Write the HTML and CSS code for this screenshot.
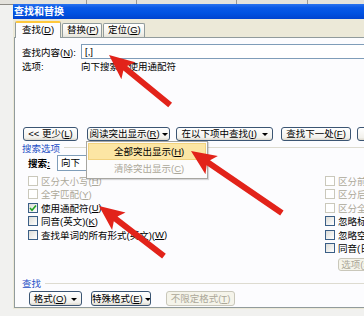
FILE: index.html
```html
<!DOCTYPE html>
<html lang="zh-CN">
<head>
    <meta charset="UTF-8">
    <title>查找和替换</title>
    <link rel="stylesheet" href="styles.css">
</head>
<body>
    <div class="strip">
        <span class="cell" style="width: 87px"></span>
        <span class="cell" style="width: 50px"></span>
        <span class="cell" style="width: 100px"></span>
        <span class="cell" style="width: 71px"></span>
    </div>

    <div class="window">
        <div class="titlebar">查找和替换</div>

        <div class="tabs">
            <div class="tab active">查找(<u>D</u>)</div>
            <div class="tab">替换(<u>P</u>)</div>
            <div class="tab">定位(<u>G</u>)</div>
        </div>

        <div class="panel">
            <div class="find-row">
                <span class="field-label">查找内容(<u>N</u>):</span>
                <div class="input">[,]</div>
            </div>
            <div class="options-row">
                <span class="field-label">选项:</span>
                <span>向下搜索，使用通配符</span>
            </div>

            <div class="btn-row">
                <button class="btn btn-less">&lt;&lt; 更少(<u>L</u>)</button>
                <button class="btn btn-read">阅读突出显示(<u>R</u>)<i class="caret"></i></button>
                <button class="btn btn-within">在以下项中查找(<u>I</u>) <i class="caret"></i></button>
                <button class="btn btn-next">查找下一处(<u>F</u>)</button>
                <button class="btn btn-cancel">取消</button>
            </div>

            <div class="group-head"><span>搜索选项</span><span class="rule"></span></div>

            <div class="search-row">
                <span class="search-label">搜索<u>:</u></span>
                <div class="select">向下</div>
            </div>

            <div class="checks">
                <div class="col">
                    <div class="check disabled"><span class="box"></span>区分大小写(<u>H</u>)</div>
                    <div class="check disabled"><span class="box"></span>全字匹配(<u>Y</u>)</div>
                    <div class="check"><span class="box"><svg width="8" height="8" viewBox="0 0 8 8"><path d="M1 4 L3 6.2 L7 1.5" fill="none" stroke="#21a121" stroke-width="1.6"/></svg></span>使用通配符(<u>U</u>)</div>
                    <div class="check"><span class="box"></span>同音(英文)(<u>K</u>)</div>
                    <div class="check"><span class="box"></span>查找单词的所有形式(英文)(<u>W</u>)</div>
                </div>
                <div class="col">
                    <div class="check disabled"><span class="box"></span>区分前缀(<u>X</u>)</div>
                    <div class="check disabled"><span class="box"></span>区分后缀(<u>T</u>)</div>
                    <div class="check disabled"><span class="box"></span>区分全/半角(<u>M</u>)</div>
                    <div class="check"><span class="box"></span>忽略标点符号(<u>S</u>)</div>
                    <div class="check"><span class="box"></span>忽略空格(<u>A</u>)</div>
                    <div class="check"><span class="box"></span>同音(日文)(<u>J</u>)</div>
                    <button class="btn btn-opts" disabled>选项(<u>S</u>)...</button>
                </div>
            </div>

            <div class="group-head group-find"><span>查找</span><span class="rule"></span></div>

            <div class="btn-row bottom-row">
                <button class="btn btn-format">格式(<u>O</u>) <i class="caret"></i></button>
                <button class="btn btn-special">特殊格式(<u>E</u>)<i class="caret"></i></button>
                <button class="btn btn-noformat" disabled>不限定格式(<u>T</u>)</button>
            </div>
        </div>
    </div>

    <!-- dropdown of the "阅读突出显示" button -->
    <div class="menu">
        <div class="menu-item hot">全部突出显示(<u>H</u>)</div>
        <div class="menu-item off">清除突出显示(<u>C</u>)</div>
    </div>

    <!-- red annotation arrows -->
    <svg class="arrows" width="364" height="316" viewBox="0 0 364 316">
        <g fill="#e2231a">
            <polygon transform="translate(109 55) rotate(39.3)" points="0,0 25,-11 21,-3 79,-3 79,3 21,3 25,11"/>
            <polygon transform="translate(191 151) rotate(34.3)" points="0,0 25,-11 21,-3 110,-3 110,3 21,3 25,11"/>
            <polygon transform="translate(99 206) rotate(37.6)" points="0,0 25,-11 21,-3 82,-3 82,3 21,3 25,11"/>
        </g>
    </svg>
</body>
</html>
```

FILE: styles.css
```css
* {
    box-sizing: border-box;
}

body {
    margin: 0;
    width: 364px;
    height: 316px;
    overflow: hidden;
    position: relative;
    background: #f1f1ef;
    font-family: "Liberation Sans", "Noto Sans CJK SC", sans-serif;
    font-size: 9.5px;
    color: #000;
    white-space: nowrap;
}

u {
    text-decoration: underline;
}

/* toolbar of the window behind */
.strip {
    display: flex;
    height: 5px;
    background: #e4e2dc;
    border-bottom: 1px solid #8d8b85;
}

.strip .cell {
    border-right: 1px solid #9a9892;
    height: 100%;
}

.window {
    margin-left: 13px;
    height: 305px;
    background: #ece9d8;
    overflow: hidden;
    margin-top: -1px;
}

.titlebar {
    height: 15px;
    line-height: 15px;
    padding-left: 1px;
    color: #fff;
    font-weight: bold;
    font-size: 10px;
    background: linear-gradient(to bottom, #2a72ee 0, #0a58e6 25%, #0052e2 60%, #0043cf 100%);
}

.tabs {
    display: flex;
    align-items: flex-end;
    height: 18px;
    padding-left: 2px;
}

.tab {
    height: 14px;
    line-height: 12px;
    padding: 0 4px;
    margin-right: 1px;
    border: 1px solid #919b9c;
    border-bottom: 0;
    border-radius: 2px 2px 0 0;
    background: linear-gradient(#fff, #f3f2ec 70%, #e6e4db);
    text-align: center;
}

.tab.active {
    height: 17px;
    line-height: 14px;
    width: 46px;
    background: #fcfcfe;
    border-top: 2px solid #ffc83c;
    position: relative;
    z-index: 1;
    margin-bottom: -1px;
}

.tab:nth-child(2) {
    width: 40px;
}

.tab:nth-child(3) {
    width: 42px;
}

.panel {
    margin-left: 1px;
    width: 360px;
    height: 271px;
    background: #fcfcfe;
    border: 1px solid #919b9c;
    padding: 6px 0 0 7px;
}

.find-row {
    display: flex;
    align-items: center;
    height: 15px;
}

.field-label {
    width: 59px;
    flex: none;
}

.input {
    width: 300px;
    height: 15px;
    line-height: 13px;
    border: 1px solid #7f9db9;
    background: #fff;
    padding-left: 3px;
}

.options-row {
    display: flex;
    align-items: center;
    height: 13px;
}

.btn-row {
    display: flex;
    margin-top: 55px;
    height: 14px;
}

.btn {
    font: inherit;
    height: 14px;
    line-height: 12px;
    padding: 0;
    border: 1px solid #3b5573;
    border-radius: 3px;
    background: linear-gradient(#fff, #f2f1ec 80%, #dcd8cc);
    color: #000;
    white-space: nowrap;
    overflow: hidden;
    flex: none;
}

.btn:disabled {
    border-color: #c9c7ba;
    background: #f5f4ea;
    color: #aca899;
}

.caret {
    display: inline-block;
    width: 0;
    height: 0;
    border-left: 3px solid transparent;
    border-right: 3px solid transparent;
    border-top: 3px solid #000;
    vertical-align: middle;
    margin-left: 2px;
}

.btn-less {
    width: 55px;
    margin-left: 1px;
}

.btn-read {
    width: 83px;
    margin-left: 9px;
}

.btn-within {
    width: 97px;
    margin-left: 6px;
}

.btn-next {
    width: 70px;
    margin-left: 8px;
}

.btn-cancel {
    width: 50px;
    margin-left: 6px;
}

.group-head {
    display: flex;
    align-items: center;
    height: 13px;
    color: #1c4fc6;
}

.group-head .rule {
    flex: 1;
    height: 1px;
    background: #dddbd0;
    margin-left: 4px;
}

.search-row {
    display: flex;
    align-items: center;
    height: 16px;
    margin-top: 1px;
    padding-left: 6px;
}

.search-label {
    width: 29px;
    font-weight: bold;
}

.select {
    width: 110px;
    height: 16px;
    line-height: 14px;
    border: 1px solid #7f9db9;
    background: #fff;
    padding-left: 3px;
}

.checks {
    display: grid;
    grid-template-columns: 297px auto;
    margin-top: 3px;
    padding-left: 6px;
}

.check {
    display: flex;
    align-items: center;
    height: 13.5px;
}

.box {
    width: 10px;
    height: 10px;
    margin-right: 3px;
    flex: none;
    border: 1px solid #3a5e86;
    background: linear-gradient(135deg, #dcdcd7, #fff);
    display: flex;
    align-items: center;
    justify-content: center;
}

.check.disabled {
    color: #aca899;
}

.check.disabled .box {
    border-color: #cac8bb;
    background: #fff;
}

.btn-opts {
    width: 46px;
    height: 13px;
    margin: 3px 0 0 13px;
}

.group-find {
    margin-top: 6px;
    height: 12px;
}

.bottom-row {
    margin-top: 2px;
    height: 15px;
}

.bottom-row .btn {
    height: 15px;
    line-height: 13px;
}

.btn-format {
    width: 53px;
    margin-left: 7px;
}

.btn-special {
    width: 60px;
    margin-left: 9px;
}

.btn-noformat {
    width: 69px;
    margin-left: 15px;
}

/* overlays */
.menu {
    position: absolute;
    left: 86px;
    top: 141px;
    width: 122px;
    padding: 1px;
    background: #fcfcfc;
    border: 1px solid #a7a6a0;
    box-shadow: 1px 1px 1px rgba(0, 0, 0, 0.15);
}

.menu-item {
    height: 17px;
    line-height: 17px;
    padding-left: 26px;
}

.menu-item.hot {
    background: #fce6a4;
    outline: 1px solid #f2d27e;
    outline-offset: -1px;
}

.menu-item.off {
    color: #aca899;
}

.arrows {
    position: absolute;
    left: 0;
    top: 0;
}
```
